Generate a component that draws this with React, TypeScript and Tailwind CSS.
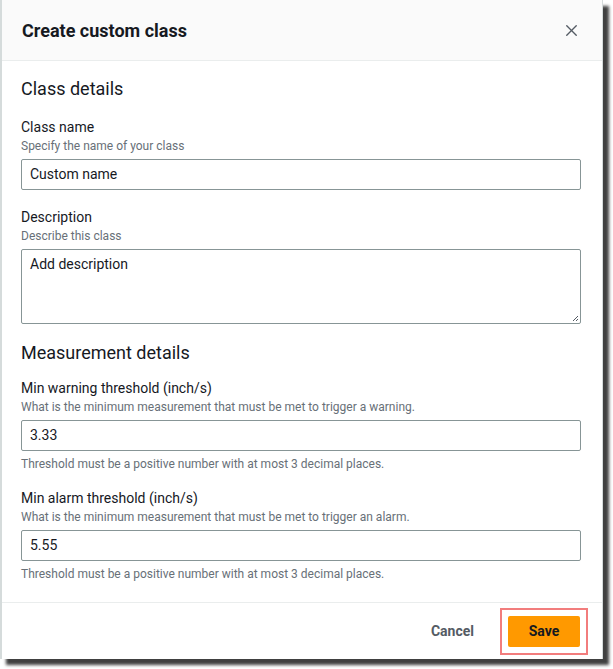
import { X } from 'lucide-react';

function Field({
  label,
  help,
  value,
  note,
}: {
  label: string;
  help: string;
  value: string;
  note?: string;
}) {
  return (
    <div className="flex flex-col">
      <label className="text-[14px] leading-[21px] text-[#16191f]">{label}</label>
      <p className="text-[12px] leading-[17px] text-[#687078]">{help}</p>
      <div className="mt-[4px] h-[31px] rounded-[2px] border border-[#879596] px-[8px] flex items-center text-[14px] text-[#16191f]">
        {value}
      </div>
      {note && <p className="mt-[5px] text-[12px] leading-[16px] text-[#687078]">{note}</p>}
    </div>
  );
}

export default function App() {
  return (
    <div className="w-[613px] h-[669px] bg-white font-['Roboto',sans-serif]">
      <div className="w-[603px] h-[659px] bg-white border-l-2 border-r border-[#d5dbdb] shadow-[6px_6px_3px_rgba(0,0,0,0.75)] flex flex-col">
        {/* header */}
        <div className="h-[61px] shrink-0 bg-[#fafafa] border-b border-[#eaeded] flex items-center justify-between pl-[20px] pr-[21px]">
          <h1 className="text-[18px] font-bold text-[#16191f]">Create custom class</h1>
          <X className="w-[19px] h-[19px] text-[#545b64]" strokeWidth={1.75} />
        </div>

        {/* body */}
        <div className="flex-1 pl-[19px] pr-[21px] pt-[16px] flex flex-col">
          <h2 className="text-[18px] leading-[24px] text-[#16191f]">Class details</h2>
          <div className="mt-[16px]">
            <Field label="Class name" help="Specify the name of your class" value="Custom name" />
          </div>
          <div className="mt-[17px] flex flex-col">
            <label className="text-[14px] leading-[21px] text-[#16191f]">Description</label>
            <p className="text-[12px] leading-[17px] text-[#687078]">Describe this class</p>
            <div className="relative mt-[4px] h-[75px] rounded-[2px] border border-[#879596] px-[8px] pt-[4px] text-[14px] text-[#16191f]">
              Add description
              <svg className="absolute right-[1px] bottom-[1px]" width="7" height="7" viewBox="0 0 7 7">
                <path d="M6 1L1 6M6 4L4 6" stroke="#545b64" strokeWidth="1" />
              </svg>
            </div>
          </div>

          <h2 className="mt-[17px] text-[18px] leading-[24px] text-[#16191f]">Measurement details</h2>
          <div className="mt-[13px]">
            <Field
              label="Min warning threshold (inch/s)"
              help="What is the minimum measurement that must be met to trigger a warning."
              value="3.33"
              note="Threshold must be a positive number with at most 3 decimal places."
            />
          </div>
          <div className="mt-[16px]">
            <Field
              label="Min alarm threshold (inch/s)"
              help="What is the minimum measurement that must be met to trigger an alarm."
              value="5.55"
              note="Threshold must be a positive number with at most 3 decimal places."
            />
          </div>
        </div>

        {/* footer */}
        <div className="h-[57px] shrink-0 border-t border-[#eaeded] flex items-center justify-end pr-[14px]">
          <button className="text-[14px] font-bold text-[#545b64] mr-[26px]">Cancel</button>
          <div className="border-2 border-[#f27d7d] p-[6px]">
            <button className="w-[72px] h-[31px] rounded-[2px] bg-[#ff9900] text-[14px] font-bold text-[#16191f]">
              Save
            </button>
          </div>
        </div>
      </div>
    </div>
  );
}
